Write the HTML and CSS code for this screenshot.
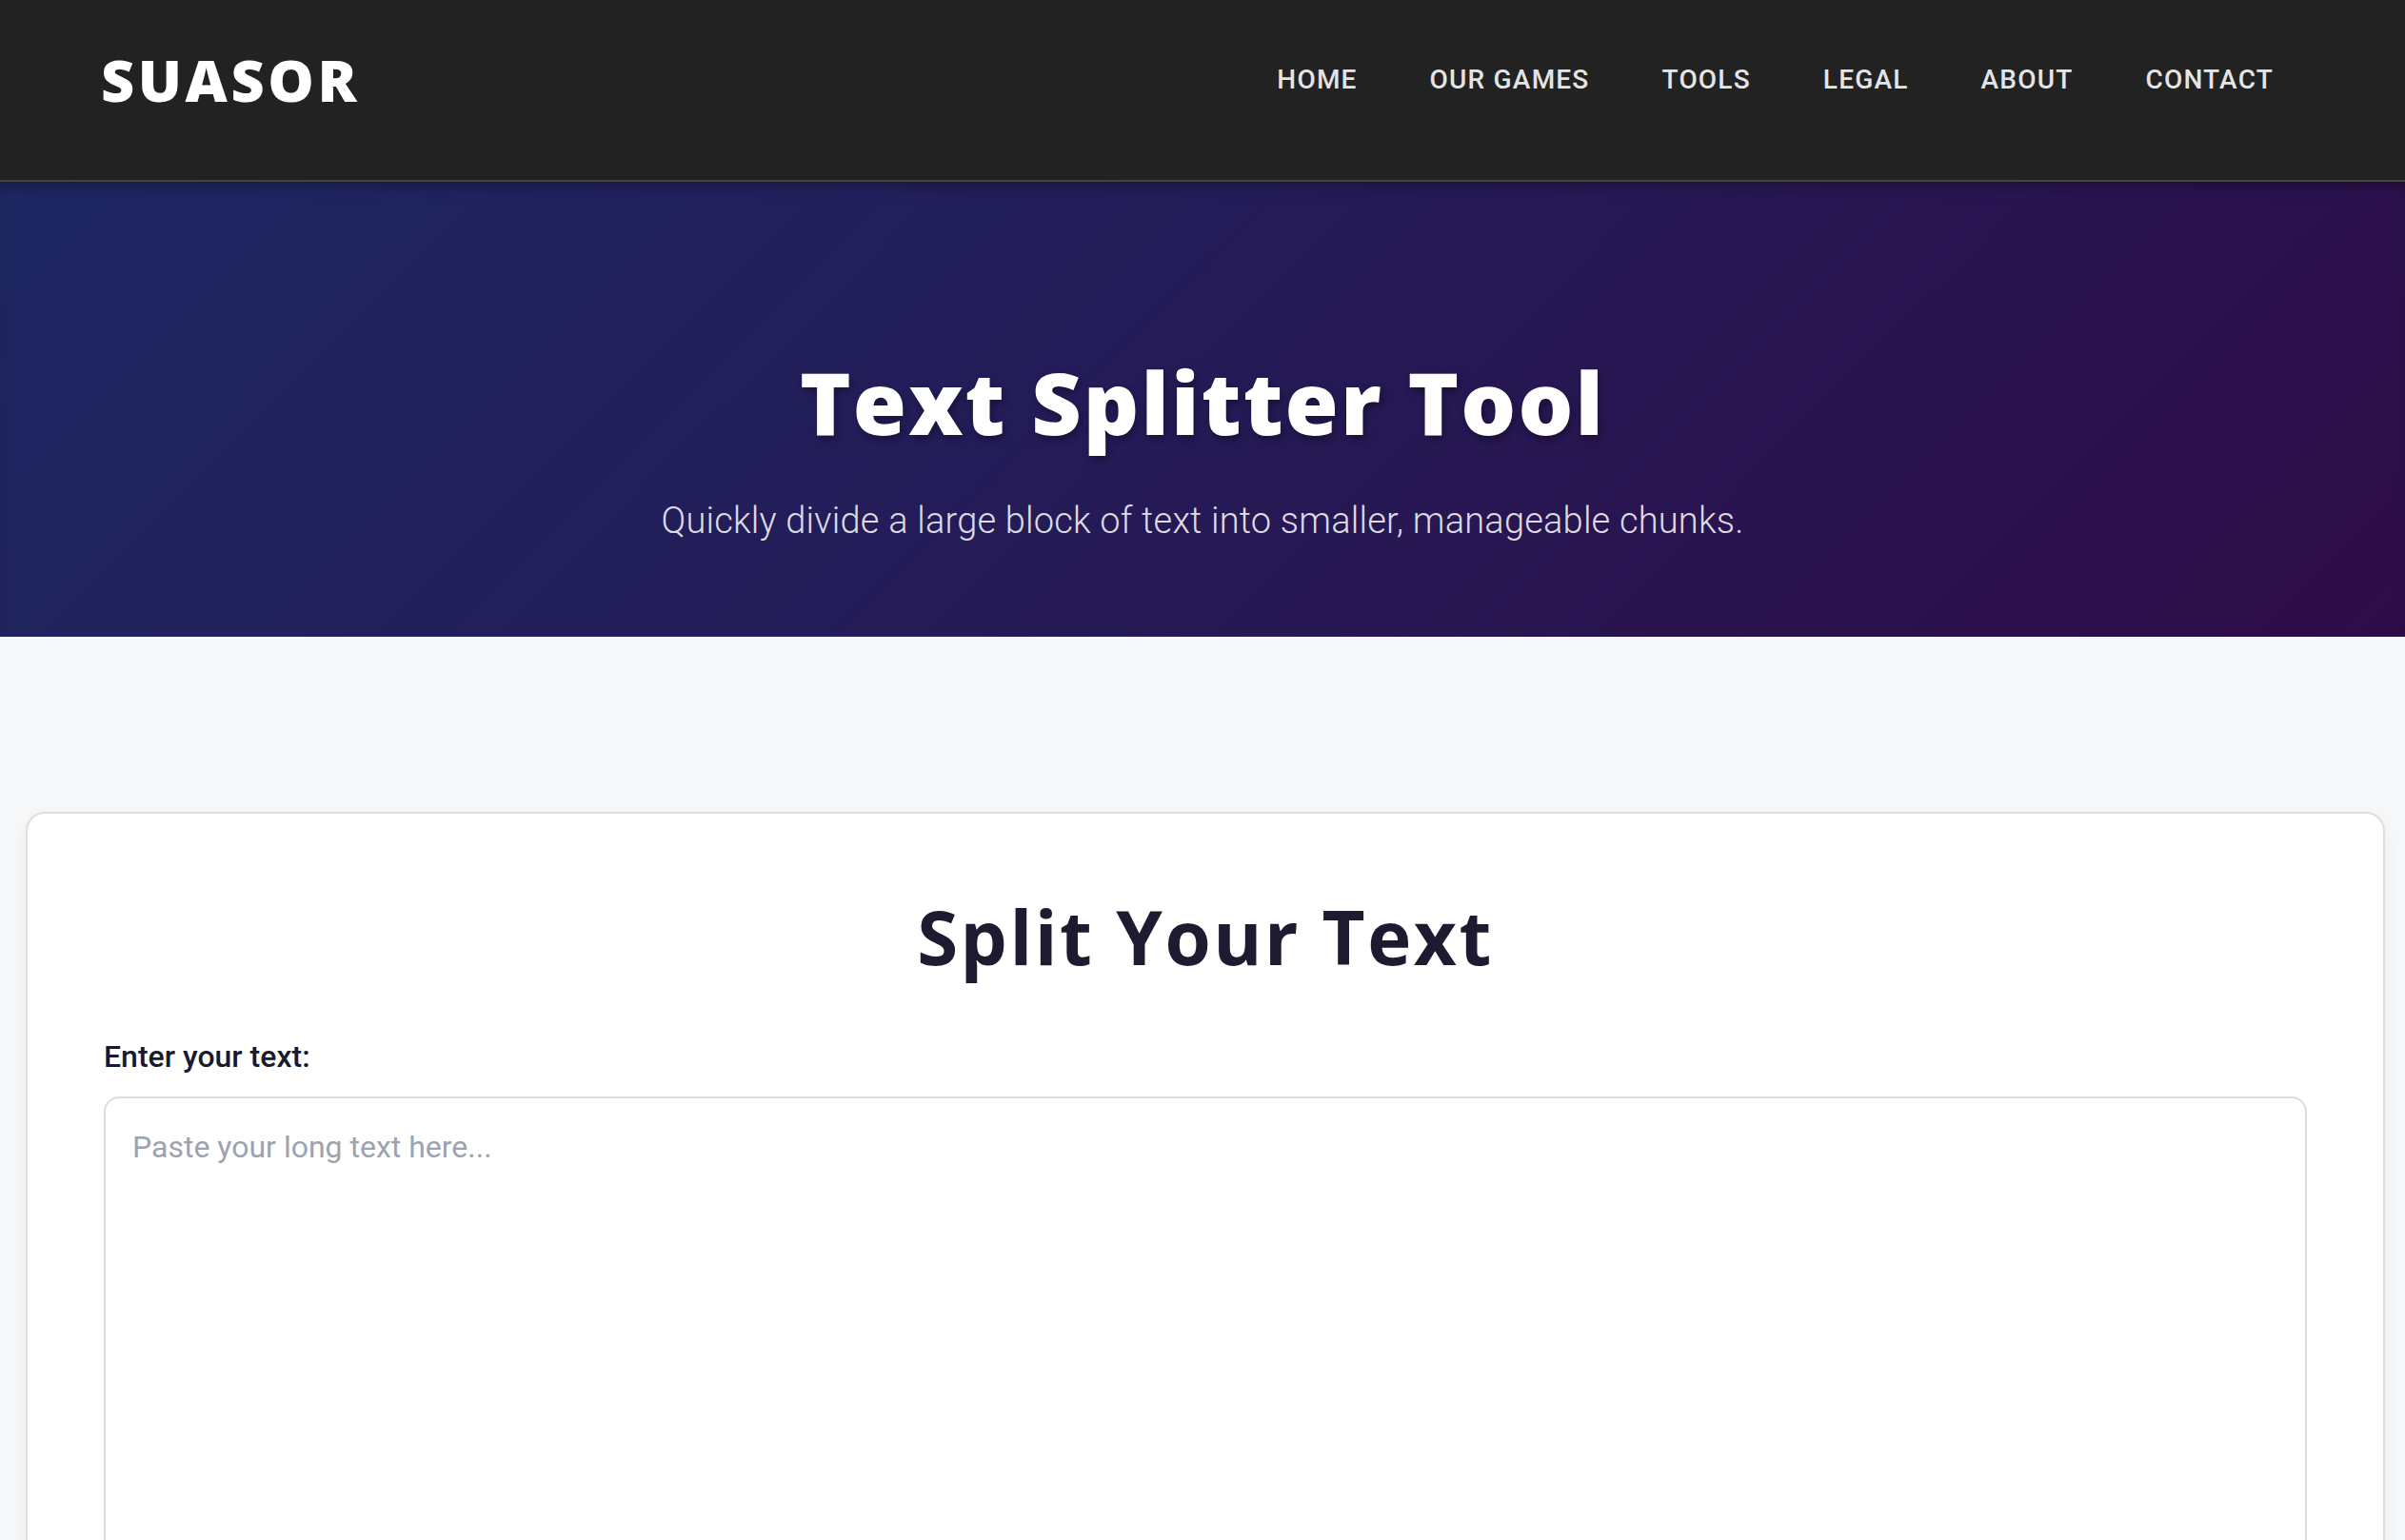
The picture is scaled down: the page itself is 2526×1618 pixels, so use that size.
FILE: index.html
```html
<!DOCTYPE html>
<html lang="en">
<head>
    <meta charset="UTF-8">
    <meta name="viewport" content="width=device-width, initial-scale=1.0">
    <link rel="stylesheet" href="styles.css">
    <title>Text Splitter Tool - Suasor</title>
</head>
<body>
    <header class="site-header">
        <a href="#" class="logo">SUASOR</a>
        <nav>
            <ul class="nav-links">
                <li><a href="#">Home</a></li>
                <li><a href="#">Our Games</a></li>
                <li><a href="#">Tools</a></li>
                <li><a href="#">Legal</a></li>
                <li><a href="#">About</a></li>
                <li><a href="#">Contact</a></li>
            </ul>
        </nav>
    </header>

    <section class="hero">
        <h1>Text Splitter Tool</h1>
        <p>Quickly divide a large block of text into smaller, manageable chunks.</p>
    </section>

    <main class="content">
        <div class="tool-card">
            <h2>Split Your Text</h2>
            <label for="inputText" class="field-label">Enter your text:</label>
            <textarea id="inputText" class="text-input" placeholder="Paste your long text here..."></textarea>
        </div>
    </main>
</body>
</html>
```

FILE: styles.css
```css
body {
    margin: 0;
    font-family: Roboto, "Liberation Sans", sans-serif;
    background-color: #f7f8fa;
    color: #1a1a2e;
}

.site-header {
    display: flex;
    justify-content: space-between;
    align-items: center;
    height: 167px;
    padding: 0 100px 22px 106px;
    background-color: #222;
    border-bottom: 2px solid #444;
}

.logo {
    font-family: "Open Sans", sans-serif;
    font-weight: 800;
    font-size: 61px;
    letter-spacing: 3.6px;
    color: #fff;
    text-decoration: none;
    line-height: 1;
}

.nav-links {
    display: flex;
    list-style: none;
    margin: 0;
    padding: 0;
}

.nav-links a {
    display: block;
    padding: 0 38px;
    font-size: 28px;
    font-weight: 500;
    letter-spacing: 1.2px;
    text-transform: uppercase;
    color: #e4e4e4;
    text-decoration: none;
}

.hero {
    padding: 177px 20px 93px;
    text-align: center;
    background: linear-gradient(135deg, #1d2762 0%, #241c58 45%, #2e0c47 100%);
    box-shadow: inset 0 12px 18px -12px rgba(0, 0, 0, 0.45);
}

.hero h1 {
    margin: 0 0 42px;
    font-family: "Open Sans", sans-serif;
    font-weight: 800;
    font-size: 91px;
    line-height: 1.2;
    letter-spacing: 2.1px;
    color: #fff;
    text-shadow: 2px 4px 8px rgba(0, 0, 0, 0.35);
}

.hero p {
    margin: 0;
    font-size: 38px;
    font-weight: 300;
    line-height: 1.5;
    letter-spacing: 0.2px;
    color: rgba(255, 255, 255, 0.86);
}

.content {
    padding: 184px 21px 80px 27px;
}

.tool-card {
    padding: 80px;
    background: #fff;
    border: 2px solid #dedede;
    border-radius: 20px;
    box-shadow: 0 6px 24px rgba(0, 0, 0, 0.05);
}

.tool-card h2 {
    margin: 3px 0 54px;
    text-align: center;
    font-family: "Open Sans", sans-serif;
    font-weight: 700;
    font-size: 78px;
    line-height: 1.2;
    letter-spacing: 2.5px;
    color: #1c1b30;
}

.field-label {
    display: block;
    margin-bottom: 18px;
    font-size: 32px;
    font-weight: 500;
    line-height: 1.5;
    color: #1a1a2e;
}

.text-input {
    display: block;
    box-sizing: border-box;
    width: 100%;
    height: 620px;
    padding: 26px 28px;
    font-family: Roboto, sans-serif;
    font-size: 32px;
    line-height: 1.6;
    color: #1a1a2e;
    border: 2px solid #dcdcdc;
    border-radius: 16px;
    resize: vertical;
}

.text-input::placeholder {
    color: #9ca3af;
}
```
